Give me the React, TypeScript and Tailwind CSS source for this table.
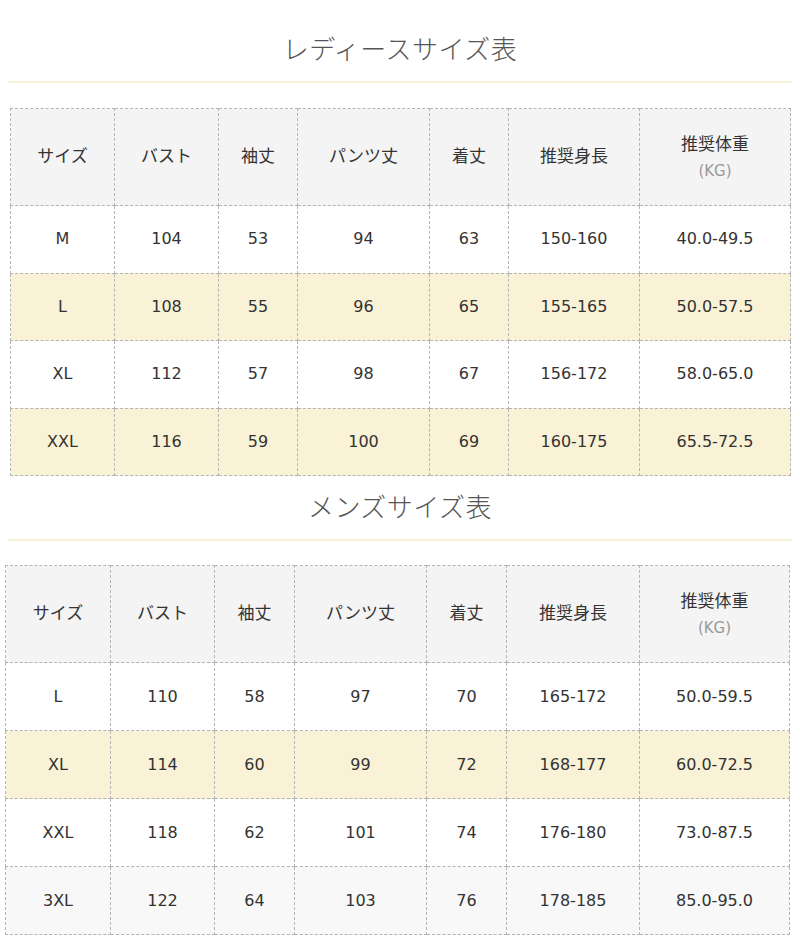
import React from 'react';

type Row = { cells: string[]; bg: string };

const headers = ['サイズ', 'バスト', '袖丈', 'パンツ丈', '着丈', '推奨身長'];

const ladiesRows: Row[] = [
  { cells: ['M', '104', '53', '94', '63', '150-160', '40.0-49.5'], bg: 'bg-white' },
  { cells: ['L', '108', '55', '96', '65', '155-165', '50.0-57.5'], bg: 'bg-[#f9f2d6]' },
  { cells: ['XL', '112', '57', '98', '67', '156-172', '58.0-65.0'], bg: 'bg-white' },
  { cells: ['XXL', '116', '59', '100', '69', '160-175', '65.5-72.5'], bg: 'bg-[#f9f2d6]' },
];

const mensRows: Row[] = [
  { cells: ['L', '110', '58', '97', '70', '165-172', '50.0-59.5'], bg: 'bg-white' },
  { cells: ['XL', '114', '60', '99', '72', '168-177', '60.0-72.5'], bg: 'bg-[#f9f2d6]' },
  { cells: ['XXL', '118', '62', '101', '74', '176-180', '73.0-87.5'], bg: 'bg-white' },
  { cells: ['3XL', '122', '64', '103', '76', '178-185', '85.0-95.0'], bg: 'bg-[#f8f8f8]' },
];

const cell = 'border border-dashed border-[#b4b4b4] text-center align-middle';

const SizeTable = ({
  rows,
  widths,
  rowH,
  className,
}: {
  rows: Row[];
  widths: number[];
  rowH: string;
  className: string;
}) => (
  <table className={`border-collapse table-fixed text-[16px] text-[#333] ${className}`}>
    <colgroup>
      {widths.map((w, i) => (
        <col key={i} style={{ width: w }} />
      ))}
    </colgroup>
    <thead>
      <tr className="h-[97px] bg-[#f4f4f4] text-[17px]">
        {headers.map((h) => (
          <th key={h} className={`${cell} font-normal`}>
            {h}
          </th>
        ))}
        <th className={`${cell} font-normal leading-[26px]`}>
          推奨体重
          <br />
          <span className="text-[15px] text-[#999]">(KG)</span>
        </th>
      </tr>
    </thead>
    <tbody>
      {rows.map((r) => (
        <tr key={r.cells[0]} className={`${rowH} ${r.bg}`}>
          {r.cells.map((c, i) => (
            <td key={i} className={cell}>
              {c}
            </td>
          ))}
        </tr>
      ))}
    </tbody>
  </table>
);

const Title = ({ text, className }: { text: string; className: string }) => (
  <div className={`mx-[8px] border-b-2 border-[#f6f0d8] pb-[14px] ${className}`}>
    <h2 className="text-center text-[26px] leading-[34px] font-light text-[#555] tracking-[0.5px]">
      {text}
    </h2>
  </div>
);

const App = () => {
  return (
    <div
      className="w-[800px] bg-white"
      style={{ fontFamily: '"DejaVu Sans", "Noto Sans CJK JP", sans-serif' }}
    >
      <Title text="レディースサイズ表" className="pt-[33px]" />
      <SizeTable
        rows={ladiesRows}
        widths={[104, 104, 79, 132, 79, 131, 151]}
        rowH="h-[67.5px]"
        className="mt-[25px] ml-[10px] w-[780px]"
      />
      <Title text="メンズサイズ表" className="pt-[15px]" />
      <SizeTable
        rows={mensRows}
        widths={[105, 104, 80, 132, 80, 133, 150]}
        rowH="h-[68px]"
        className="mt-[24px] ml-[5px] w-[784px]"
      />
    </div>
  );
};

export default App;
